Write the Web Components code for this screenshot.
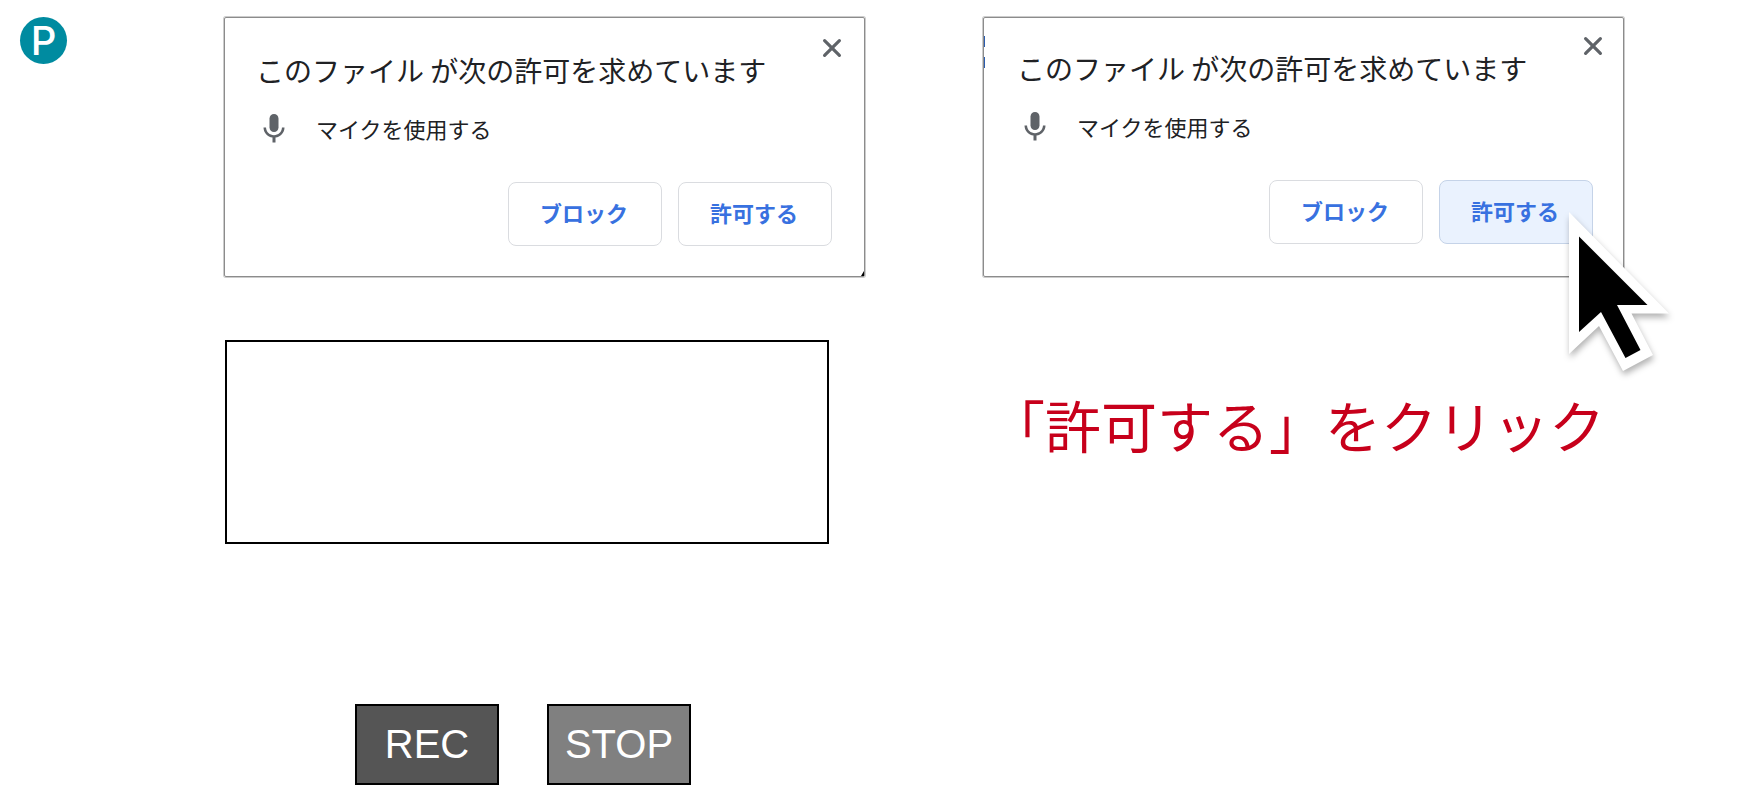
<!DOCTYPE html>
<html lang="ja">
<head>
<meta charset="utf-8">
<meta name="viewport" content="width=device-width, initial-scale=1">
<title>録音</title>
<style>
    body {
        margin: 0;
        background: #fff;
        font-family: "Liberation Sans", "Noto Sans CJK JP", sans-serif;
    }
</style>
</head>
<body>
<rec-page>
    <round-badge slot="badge">P</round-badge>

    <permission-prompt slot="left" class="before">
        <span slot="title">このファイル が次の許可を求めています</span>
        <span slot="message">マイクを使用する</span>
        <prompt-button slot="buttons">ブロック</prompt-button>
        <prompt-button slot="buttons">許可する</prompt-button>
    </permission-prompt>
    <rec-panel slot="left"></rec-panel>

    <permission-prompt slot="right" class="after">
        <span slot="title">このファイル が次の許可を求めています</span>
        <span slot="message">マイクを使用する</span>
        <prompt-button slot="buttons">ブロック</prompt-button>
        <prompt-button slot="buttons" active>許可する</prompt-button>
        <mouse-pointer slot="overlay"></mouse-pointer>
    </permission-prompt>
    <rec-caption slot="right">「許可する」をクリック</rec-caption>
</rec-page>

<script>
class RecPage extends HTMLElement {
    constructor() {
        super();
        this._root = this.attachShadow({mode:"open"});
        this._root.innerHTML = `
            <style>
                :host {
                    display: flex;
                    align-items: flex-start;
                    padding: 17px 116px 15px 20px;
                }
                header { flex: none; width: 204px; }
                main {
                    flex: 1;
                    display: grid;
                    grid-template-columns: 1fr 1fr;
                    column-gap: 118px;
                }
            </style>
            <header><slot name="badge"></slot></header>
            <main>
                <section><slot name="left"></slot></section>
                <section><slot name="right"></slot></section>
            </main>
        `;
    }
}
window.customElements.define("rec-page", RecPage);

class RoundBadge extends HTMLElement {
    constructor() {
        super();
        this._root = this.attachShadow({mode:"open"});
        this._root.innerHTML = `
            <style>
                :host {
                    display: flex;
                    align-items: center;
                    justify-content: center;
                    width: 47px;
                    height: 47px;
                    border-radius: 50%;
                    background: #008ba0;
                    color: #fff;
                    font: 500 40px/47px Inter, sans-serif;
                }
            </style>
            <slot></slot>
        `;
    }
}
window.customElements.define("round-badge", RoundBadge);

class PermissionPrompt extends HTMLElement {
    constructor() {
        super();
        this._root = this.attachShadow({mode:"open"});
        this._root.innerHTML = `
            <style>
                :host {
                    display: block;
                    position: relative;
                    border: 1px solid #8c8c8c;
                    border-radius: 2px;
                    box-shadow: 0 0 0 1px #ccc;
                    padding: 20px 32px 30px 31px;
                    color: #202124;
                    font-family: "Noto Sans CJK JP", sans-serif;
                }
                :host(.after) { padding: 18px 30px 32px 33px; }
                /* leftovers of the window behind the prompt */
                :host(.before)::after {
                    content: "";
                    position: absolute;
                    right: 0;
                    bottom: 0;
                    border-left: 3px solid transparent;
                    border-bottom: 5px solid #000;
                }
                :host(.after)::before {
                    content: "";
                    position: absolute;
                    left: 0;
                    top: 18px;
                    width: 1px;
                    height: 32px;
                    background: linear-gradient(#2a5db0 11px, transparent 11px 21px, #2a5db0 21px);
                }
                .header {
                    display: flex;
                    align-items: flex-start;
                    justify-content: space-between;
                }
                h2 {
                    margin: 12px 0 0;
                    font-size: 28px;
                    line-height: 40px;
                    font-weight: 400;
                    white-space: nowrap;
                }
                .close {
                    margin: 0 -10px 0 0;
                    padding: 0;
                    border: 0;
                    background: none;
                    height: 20px;
                }
                svg { display: block; }
                .message {
                    display: flex;
                    align-items: center;
                    gap: 24px;
                    height: 36px;
                    margin-top: 21px;
                }
                p {
                    margin: 0;
                    padding-bottom: 2px;
                    font-size: 22px;
                    line-height: 32px;
                }
                .buttons {
                    display: flex;
                    justify-content: flex-end;
                    gap: 16px;
                    margin-top: 35px;
                }
            </style>
            <div class="header">
                <h2><slot name="title"></slot></h2>
                <button class="close" type="button" aria-label="閉じる">
                    <svg width="20" height="20" viewBox="0 0 20 20">
                        <path d="M2.6 2.6 17.4 17.4M17.4 2.6 2.6 17.4" stroke="#5f6368" stroke-width="3.2" stroke-linecap="round"/>
                    </svg>
                </button>
            </div>
            <div class="message">
                <svg width="36" height="36" viewBox="0 0 24 24" fill="#5f6368">
                    <path d="M12 14c1.66 0 3-1.34 3-3V5c0-1.66-1.34-3-3-3S9 3.34 9 5v6c0 1.66 1.34 3 3 3z"/>
                    <path d="M17.3 11c0 3-2.54 5.1-5.3 5.1S6.7 14 6.7 11H5c0 3.41 2.72 6.23 6 6.72V21h2v-3.28c3.28-.48 6-3.3 6-6.72h-1.7z"/>
                </svg>
                <p><slot name="message"></slot></p>
            </div>
            <div class="buttons"><slot name="buttons"></slot></div>
            <slot name="overlay"></slot>
        `;
    }
}
window.customElements.define("permission-prompt", PermissionPrompt);

class PromptButton extends HTMLElement {
    constructor() {
        super();
        this._root = this.attachShadow({mode:"open"});
        this._root.innerHTML = `
            <style>
                :host { display: block; }
                button {
                    display: block;
                    box-sizing: border-box;
                    width: 154px;
                    height: 64px;
                    padding: 0 2px 4px 0;
                    border: 1px solid #dadce0;
                    border-radius: 8px;
                    background: #fff;
                    color: #3871e0;
                    font: 700 22px/32px "Noto Sans CJK JP", sans-serif;
                }
                :host([active]) button {
                    background: #eaf2fe;
                    border-color: #c5d3e8;
                }
            </style>
            <button type="button"><slot></slot></button>
        `;
    }
}
window.customElements.define("prompt-button", PromptButton);

class MousePointer extends HTMLElement {
    constructor() {
        super();
        this._root = this.attachShadow({mode:"open"});
        this._root.innerHTML = `
            <style>
                :host {
                    position: absolute;
                    right: -51px;
                    top: 186px;
                    pointer-events: none;
                }
                svg {
                    display: block;
                    overflow: visible;
                    filter: drop-shadow(1px 4px 3px rgba(0, 0, 0, .3));
                }
            </style>
            <svg width="110" height="170" viewBox="0 0 110 170">
                <path fill="#fff" d="M5 8 105 109.500H67.500L89 151 59 167 35 122 5 150z"/>
                <path fill="#000" d="M15 32.500 83.500 101H53L76.500 146 61.500 154 37 108 15 128z"/>
            </svg>
        `;
    }
}
window.customElements.define("mouse-pointer", MousePointer);

class RecPanel extends HTMLElement {
    constructor() {
        super();
        this._root = this.attachShadow({mode:"open"});
        this._root.innerHTML = `
            <style>
                :host {
                    display: block;
                    margin-top: 63px;
                    padding-left: 1px;
                }
                .monitor {
                    box-sizing: border-box;
                    max-width: 604px;
                    height: 204px;
                    border: 2px solid #000;
                }
                .controls {
                    display: flex;
                    gap: 48px;
                    margin-top: 160px;
                    padding-left: 130px;
                }
                button {
                    box-sizing: border-box;
                    width: 144px;
                    height: 81px;
                    padding: 0;
                    border: 2px solid #000;
                    color: #fff;
                    font: 40px "Liberation Sans", sans-serif;
                }
                .rec { background: #555; }
                .stop { background: #808080; }
            </style>
            <div class="monitor"></div>
            <div class="controls">
                <button class="rec" type="button">REC</button>
                <button class="stop" type="button">STOP</button>
            </div>
        `;
    }
}
window.customElements.define("rec-panel", RecPanel);

class RecCaption extends HTMLElement {
    constructor() {
        super();
        this._root = this.attachShadow({mode:"open"});
        this._root.innerHTML = `
            <style>
                :host {
                    display: block;
                    margin-top: 107px;
                    padding-left: 6px;
                    color: #c7001b;
                    font: 400 56px/80px "Noto Sans CJK JP", sans-serif;
                    white-space: nowrap;
                }
            </style>
            <slot></slot>
        `;
    }
}
window.customElements.define("rec-caption", RecCaption);
</script>
</body>
</html>
